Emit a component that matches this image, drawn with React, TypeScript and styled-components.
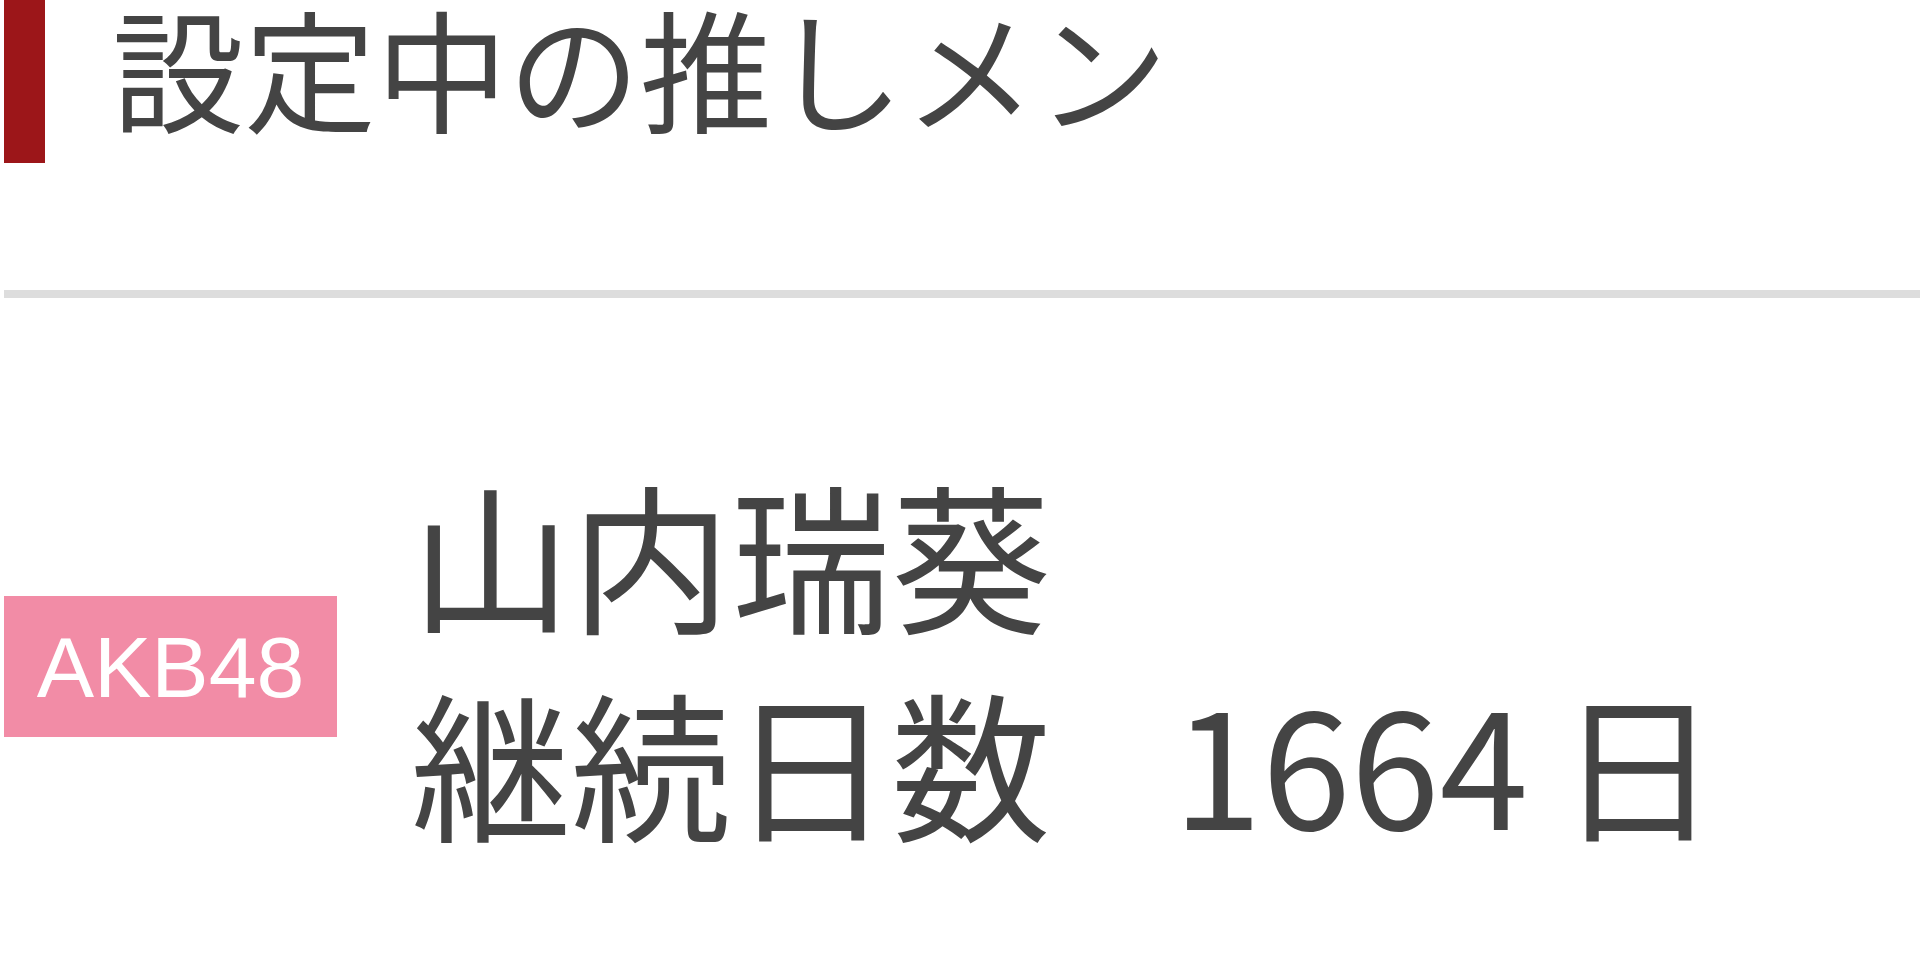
import React, { FunctionComponent } from "react";
import styled, { createGlobalStyle } from "styled-components";

const GlobalStyle = createGlobalStyle`
  html, body {
    margin: 0;
    padding: 0;
    background: #ffffff;
  }
  body {
    font-family: "Noto Sans CJK JP", "Noto Sans", sans-serif;
    color: #444444;
  }
`

const Page = styled.div`
  width: 100%;
  padding-left: 4px;
  box-sizing: border-box;
`

const Header = styled.div`
  display: flex;
  align-items: flex-start;
  height: 163px;
`

const Accent = styled.div`
  width: 41px;
  height: 163px;
  background: #9c1619;
  flex-shrink: 0;
`

const Title = styled.h2`
  margin: 0 0 0 67px;
  padding-top: 0;
  font-size: 132px;
  line-height: 1;
  font-weight: 400;
  color: #444444;
  white-space: nowrap;
`

const Divider = styled.div`
  height: 8px;
  margin-top: 127px;
  background: #dddddd;
`

const MemberRow = styled.div`
  display: flex;
  align-items: center;
  padding-top: 174px;
`

const GroupBadge = styled.div<{ $color: string }>`
  display: flex;
  align-items: center;
  justify-content: center;
  width: 333px;
  height: 141px;
  flex-shrink: 0;
  background: ${(p) => p.$color};
  color: #ffffff;
  font-family: "Liberation Sans", Arial, sans-serif;
  font-size: 86px;
  line-height: 1;
`

const MemberInfo = styled.div`
  display: flex;
  flex-direction: column;
  gap: 48px;
  margin-left: 74px;
  margin-bottom: 21px;
  font-size: 160px;
  line-height: 1;
  color: #444444;
`

const Line = styled.div`
  white-space: nowrap;
`

const Days = styled.span`
  margin-left: 122px;
`

const Unit = styled.span`
  margin-left: 30px;
`

interface IOshiMenProps {
  group?: string;
  name?: string;
  days?: number;
}

const OshiMen: FunctionComponent<IOshiMenProps> = ({
  group = "AKB48",
  name = "山内瑞葵",
  days = 1664,
}) => {
  return (
    <MemberRow>
      <GroupBadge $color="#f28ca6">{group}</GroupBadge>
      <MemberInfo>
        <Line>{name}</Line>
        <Line>
          継続日数<Days>{days}<Unit>日</Unit></Days>
        </Line>
      </MemberInfo>
    </MemberRow>
  )
}

const App: FunctionComponent = () => {
  return (
    <Page>
      <GlobalStyle />
      <Header>
        <Accent />
        <Title>設定中の推しメン</Title>
      </Header>
      <Divider />
      <OshiMen />
    </Page>
  )
}

export default App
